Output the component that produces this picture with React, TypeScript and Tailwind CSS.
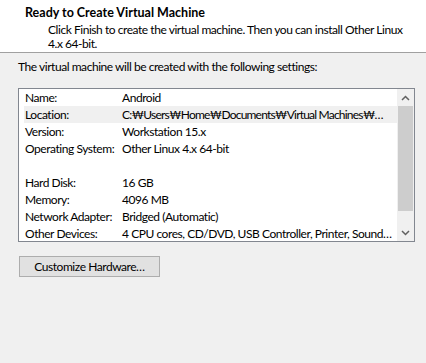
const ROWS: [string, string][] = [
  ['Name:', 'Android'],
  ['Location:', 'C:₩Users₩Home₩Documents₩Virtual Machines₩…'],
  ['Version:', 'Workstation 15.x'],
  ['Operating System:', 'Other Linux 4.x 64-bit'],
  ['', ''],
  ['Hard Disk:', '16 GB'],
  ['Memory:', '4096 MB'],
  ['Network Adapter:', 'Bridged (Automatic)'],
  ['Other Devices:', '4 CPU cores, CD/DVD, USB Controller, Printer, Sound…'],
]

export default function App() {
  return (
    <div
      className="w-[426px] h-[363px] bg-[#f0f0f0] text-[12px] tracking-[-0.45px] text-black overflow-hidden"
      style={{ fontFamily: 'Lato, "Segoe UI", sans-serif' }}
    >
      {/* Header */}
      <div className="bg-white h-[53px] border-b border-[#a0a0a0] pl-[25px] pt-[5px] leading-[15px]">
        <div className="font-bold text-[12.5px] tracking-normal">Ready to Create Virtual Machine</div>
        <div className="pl-[23px] pr-[15px] mt-[3px] leading-[14px]">
          Click Finish to create the virtual machine. Then you can install Other Linux 4.x 64-bit.
        </div>
      </div>

      <div className="px-[18px] pt-[6px]">
        <div className="leading-[16px]">The virtual machine will be created with the following settings:</div>

        {/* Settings list */}
        <div className="mt-[13px] w-[397px] h-[154px] border border-[#828790] bg-white flex">
          <div className="flex-1 min-w-0 overflow-hidden pl-[5px]">
            {ROWS.map(([k, v], i) => (
              <div
                key={i}
                className={`h-[17px] flex items-center whitespace-nowrap ${i === 1 ? 'bg-[#f0f0f0]' : ''}`}
              >
                <span className="w-[98px] pl-[1px] shrink-0">{k}</span>
                <span className={i === 1 ? 'tracking-[-0.8px]' : ''}>{v}</span>
              </div>
            ))}
          </div>
          <div className="w-[17px] shrink-0 bg-[#f0f0f0] flex flex-col">
            <div className="h-[17px] flex items-center justify-center">
              <svg width="9" height="6" viewBox="0 0 9 6">
                <path d="M1 5 L4.5 1.5 L8 5" stroke="#606060" strokeWidth="1.5" fill="none" />
              </svg>
            </div>
            <div className="h-[105px] mx-[1px] bg-[#cdcdcd]" />
            <div className="flex-1" />
            <div className="h-[17px] flex items-center justify-center">
              <svg width="9" height="6" viewBox="0 0 9 6">
                <path d="M1 1 L4.5 4.5 L8 1" stroke="#606060" strokeWidth="1.5" fill="none" />
              </svg>
            </div>
          </div>
        </div>

        <button
          type="button"
          className="mt-[14px] ml-[1px] w-[141px] h-[21px] bg-[#e1e1e1] border border-[#adadad] flex items-center justify-center leading-none"
        >
          Customize Hardware…
        </button>
      </div>
    </div>
  )
}
